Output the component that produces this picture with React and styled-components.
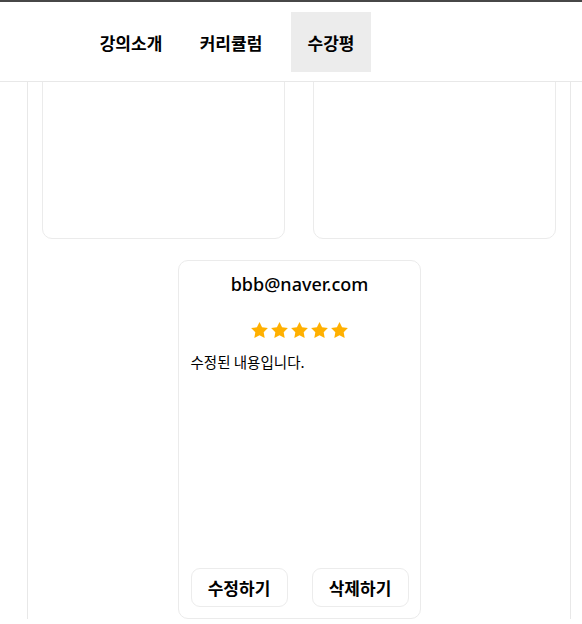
import React from 'react';
import styled, { createGlobalStyle } from 'styled-components';

const GlobalStyle = createGlobalStyle`
  html, body {
    margin: 0;
    padding: 0;
    background: #fff;
    font-family: "Noto Sans", "Noto Sans CJK KR", sans-serif;
    color: #111;
  }
`;

const Page = styled.div`
  height: 624px;
  display: flex;
  flex-direction: column;
  overflow: hidden;
`;

const Header = styled.header`
  flex: none;
  height: 79px;
  border-top: 2px solid #474747;
  border-bottom: 1px solid #e8e8e8;
  display: flex;
  align-items: flex-start;
  padding-left: 91px;
`;

const Nav = styled.nav`
  display: flex;
  gap: 20px;
  margin-top: 10px;
`;

const NavItem = styled.a`
  width: 80px;
  height: 60px;
  display: flex;
  align-items: center;
  justify-content: center;
  font-family: "Noto Sans CJK KR", sans-serif;
  font-size: 17px;
  font-weight: 700;
  color: #000;
  background: ${(p) => (p.$active ? '#ececec' : 'transparent')};
  cursor: pointer;
`;

const Viewport = styled.main`
  flex: 1;
  overflow: hidden;
`;

const Container = styled.section`
  width: 514px;
  min-height: 100%;
  margin-left: 27px;
  padding: 0 14px;
  border-left: 1px solid #e8e8e8;
  border-right: 1px solid #e8e8e8;
`;

// scrolled list: the first row sits partly under the header
const ReviewGrid = styled.div`
  display: flex;
  flex-wrap: wrap;
  justify-content: center;
  gap: 21px 28px;
  margin-top: -202px;
`;

const Card = styled.article`
  width: 243px;
  height: 359px;
  box-sizing: border-box;
  border: 1px solid #ebebeb;
  border-radius: 10px;
  padding: 11px 11px 11px 12px;
  display: flex;
  flex-direction: column;
`;

const Email = styled.h4`
  margin: 0;
  text-align: center;
  font-family: "Noto Sans", sans-serif;
  font-size: 18px;
  font-weight: 500;
  line-height: 25px;
  color: #000;
`;

const Stars = styled.div`
  display: flex;
  justify-content: center;
  gap: 3px;
  margin-top: 25px;
`;

const Content = styled.p`
  margin: 13px 0 0 0;
  font-family: "Noto Sans CJK KR", sans-serif;
  font-size: 14.5px;
  line-height: 21px;
  color: #000;
`;

const Actions = styled.div`
  margin-top: auto;
  display: flex;
  justify-content: space-between;
`;

const ActionButton = styled.button`
  width: 97px;
  height: 39px;
  border: 1px solid #ececec;
  border-radius: 9px;
  background: #fff;
  font-family: "Noto Sans CJK KR", sans-serif;
  font-size: 17px;
  font-weight: 700;
  color: #000;
  cursor: pointer;
`;

const Star = () => (
  <svg width="17" height="16" viewBox="2 2 20 19.1" fill="#ffb000">
    <path d="M12 2l3.09 6.26L22 9.27l-5 4.87 1.18 6.88L12 17.77l-6.18 3.25L7 14.14 2 9.27l6.91-1.01L12 2z" />
  </svg>
);

const reviews = [
  { id: 1, email: '', rating: 0, content: '', mine: false },
  { id: 2, email: '', rating: 0, content: '', mine: false },
  { id: 3, email: 'bbb@naver.com', rating: 5, content: '수정된 내용입니다.', mine: true },
];

export default function App() {
  return (
    <Page>
      <GlobalStyle />
      <Header>
        <Nav>
          <NavItem>강의소개</NavItem>
          <NavItem>커리큘럼</NavItem>
          <NavItem $active>수강평</NavItem>
        </Nav>
      </Header>
      <Viewport>
        <Container>
          <ReviewGrid>
            {reviews.map((r) => (
              <Card key={r.id}>
                <Email>{r.email}</Email>
                {r.rating > 0 && (
                  <Stars>
                    {Array.from({ length: r.rating }).map((_, i) => (
                      <Star key={i} />
                    ))}
                  </Stars>
                )}
                <Content>{r.content}</Content>
                {r.mine && (
                  <Actions>
                    <ActionButton>수정하기</ActionButton>
                    <ActionButton>삭제하기</ActionButton>
                  </Actions>
                )}
              </Card>
            ))}
          </ReviewGrid>
        </Container>
      </Viewport>
    </Page>
  );
}
